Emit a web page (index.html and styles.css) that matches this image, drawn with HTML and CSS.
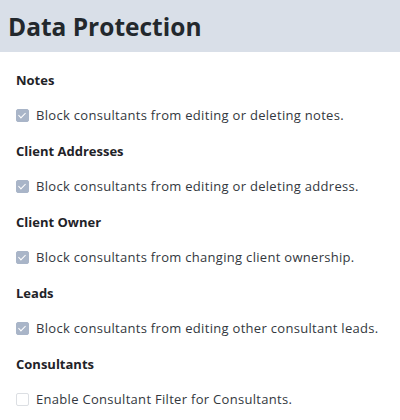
FILE: index.html
```html
<!DOCTYPE html>
<html lang="en">
<head>
    <meta charset="UTF-8">
    <meta name="viewport" content="width=device-width, initial-scale=1.0">
    <title>Data Protection</title>
    <link rel="stylesheet" href="styles.css">
</head>
<body>

<div class="page-header">
    <h1>Data Protection</h1>
</div>

<div class="settings">

    <div class="setting-group">
        <h2>Notes</h2>
        <label class="check-row">
            <input type="checkbox" checked disabled>
            <span>Block consultants from editing or deleting notes.</span>
        </label>
    </div>

    <div class="setting-group">
        <h2>Client Addresses</h2>
        <label class="check-row">
            <input type="checkbox" checked disabled>
            <span>Block consultants from editing or deleting address.</span>
        </label>
    </div>

    <div class="setting-group">
        <h2>Client Owner</h2>
        <label class="check-row">
            <input type="checkbox" checked disabled>
            <span>Block consultants from changing client ownership.</span>
        </label>
    </div>

    <div class="setting-group">
        <h2>Leads</h2>
        <label class="check-row">
            <input type="checkbox" checked disabled>
            <span>Block consultants from editing other consultant leads.</span>
        </label>
    </div>

    <div class="setting-group">
        <h2>Consultants</h2>
        <label class="check-row">
            <input type="checkbox" disabled>
            <span>Enable Consultant Filter for Consultants.</span>
        </label>
    </div>

</div>

</body>
</html>
```

FILE: styles.css
```css
body {
    margin: 0;
    font-family: "Open Sans", Arial, sans-serif;
    color: #333840;
    background: #fff;
}

.page-header {
    background-color: #d9dfe8;
    height: 52px;
    display: flex;
    align-items: center;
    padding: 0 8px;
}

.page-header h1 {
    margin: 0;
    font-size: 24.5px;
    font-weight: 700;
    color: #23282d;
}

.settings {
    padding: 18px 16px 0;
}

.setting-group {
    margin-bottom: 16px;
}

.setting-group h2 {
    margin: 0 0 15px;
    font-size: 13px;
    line-height: 20px;
    font-weight: 700;
    color: #1f2328;
}

.check-row {
    display: flex;
    align-items: center;
    gap: 7px;
    font-size: 13px;
    line-height: 20px;
    letter-spacing: 0.3px;
}

/* flat checkbox, disabled look */
.check-row input {
    appearance: none;
    margin: 0;
    width: 13px;
    height: 13px;
    border: 1px solid #dcdfe3;
    border-radius: 2px;
    background: #fff;
    position: relative;
    flex-shrink: 0;
}

.check-row input:checked {
    background: #a9b5c8;
    border-color: #a9b5c8;
}

.check-row input:checked::after {
    content: "";
    position: absolute;
    left: 3px;
    top: 1px;
    width: 3px;
    height: 6px;
    border: solid #fff;
    border-width: 0 1.5px 1.5px 0;
    transform: rotate(45deg);
}
```
